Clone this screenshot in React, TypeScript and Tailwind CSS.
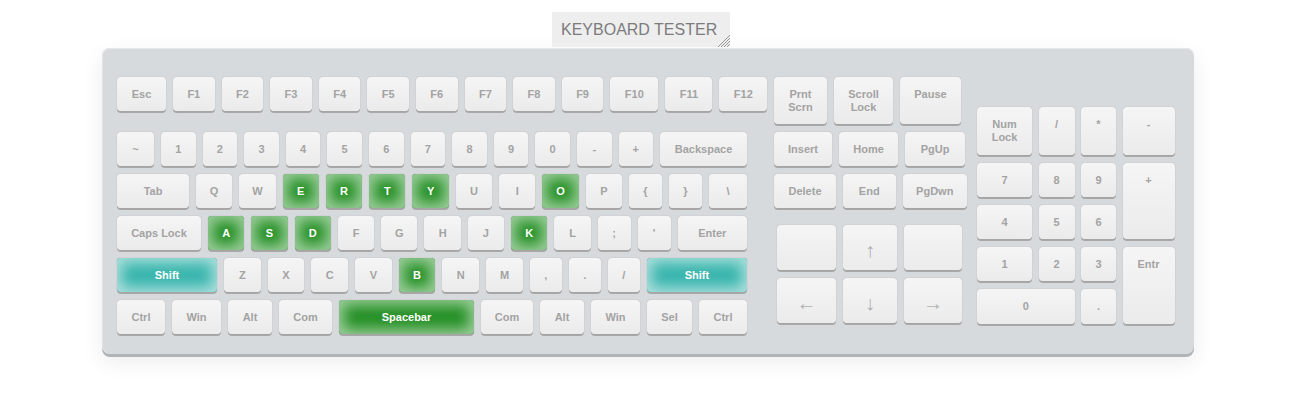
import React from "react";

type V = "n" | "g" | "s";

const styles: Record<V, string> = {
  n: "bg-linear-to-b from-[#f5f5f5] to-[#ebebeb] shadow-[0_0_1px_#8c8c8c,0_2px_0_#a8a8a8] text-[#a3a3a3]",
  g: "bg-[#238f23] shadow-[inset_0_0_14px_5px_#9dce9d,0_0_1px_#8c8c8c,0_2px_0_#a8a8a8] text-white",
  s: "bg-[#36b4ac] shadow-[inset_0_0_14px_5px_#abdfdc,0_0_1px_#8c8c8c,0_2px_0_#a8a8a8] text-white",
};

function Key({
  l,
  c = "",
  v = "n",
}: {
  l: string;
  c?: string;
  v?: V;
}) {
  return (
    <div
      className={`${c} ${styles[v]} rounded-[4px] flex justify-center items-start pt-[11px] text-[11px] leading-[12.5px] font-bold text-center whitespace-pre-line`}
    >
      {l}
    </div>
  );
}

function Arrow({ l, c }: { l: string; c: string }) {
  return (
    <div
      className={`${c} ${styles.n} rounded-[4px] flex justify-center items-center pt-[5px] text-[20px] leading-none font-normal text-[#b0b0b0]`}
    >
      {l}
    </div>
  );
}

export default function App() {
  return (
    <div className="w-[1295px] h-[400px] bg-white font-['Liberation_Sans',Arial,sans-serif]">
      <div className="flex justify-center pt-[12px] pr-[13px]">
        <div className="relative w-[178px] h-[35px] bg-[#eeeeee] flex items-center pl-[9px] text-[16px] text-[#7c7c7c]">
          KEYBOARD TESTER
          <svg
            className="absolute right-0 bottom-0"
            width="14"
            height="14"
            viewBox="0 0 14 14"
          >
            <g stroke="#808080" strokeWidth="0.8">
              <line x1="2" y1="14" x2="14" y2="2" />
              <line x1="5" y1="14" x2="14" y2="5" />
              <line x1="8" y1="14" x2="14" y2="8" />
              <line x1="11" y1="14" x2="14" y2="11" />
            </g>
          </svg>
        </div>
      </div>

      <div className="mt-[1px] mx-auto w-[1092px] h-[306px] rounded-[8px] bg-[#d7dadd] shadow-[inset_0_1px_0_#e6e8ea,inset_1px_0_0_#e2e4e6,0_3px_0_#b1b4b7,0_8px_22px_rgba(0,0,0,0.08)] flex pt-[29px] pl-[15.5px]">
        {/* main block */}
        <div className="w-[630px] shrink-0 flex flex-col">
          <div className="w-[651px] flex gap-[7px] h-[34px] mb-[21px]">
            <Key l="Esc" c="w-[49px]" />
            <Key l="F1" c="w-[41.6px]" />
            <Key l="F2" c="w-[41.6px]" />
            <Key l="F3" c="w-[41.6px]" />
            <Key l="F4" c="w-[41.6px]" />
            <Key l="F5" c="w-[41.6px]" />
            <Key l="F6" c="w-[41.6px]" />
            <Key l="F7" c="w-[41.6px]" />
            <Key l="F8" c="w-[41.6px]" />
            <Key l="F9" c="w-[41.6px]" />
            <Key l="F10" c="w-[48px]" />
            <Key l="F11" c="w-[47px]" />
            <Key l="F12" c="w-[48px]" />
          </div>
          <div className="flex gap-[7px] h-[34px] mb-[8px]">
            <Key l="~" c="w-[37px]" />
            <Key l="1" c="w-[34.6px]" />
            <Key l="2" c="w-[34.6px]" />
            <Key l="3" c="w-[34.6px]" />
            <Key l="4" c="w-[34.6px]" />
            <Key l="5" c="w-[34.6px]" />
            <Key l="6" c="w-[34.6px]" />
            <Key l="7" c="w-[34.6px]" />
            <Key l="8" c="w-[34.6px]" />
            <Key l="9" c="w-[34.6px]" />
            <Key l="0" c="w-[34.6px]" />
            <Key l="-" c="w-[34.6px]" />
            <Key l="+" c="w-[34.6px]" />
            <Key l="Backspace" c="flex-1" />
          </div>
          <div className="flex gap-[7px] h-[34px] mb-[8px]">
            <Key l="Tab" c="w-[72px]" />
            <Key l="Q" c="w-[36.3px]" />
            <Key l="W" c="w-[36.3px]" />
            <Key l="E" c="w-[36.3px]" v="g" />
            <Key l="R" c="w-[36.3px]" v="g" />
            <Key l="T" c="w-[36.3px]" v="g" />
            <Key l="Y" c="w-[36.3px]" v="g" />
            <Key l="U" c="w-[36.3px]" />
            <Key l="I" c="w-[36.3px]" />
            <Key l="O" c="w-[36.3px]" v="g" />
            <Key l="P" c="w-[36.3px]" />
            <Key l="{" c="w-[33px]" />
            <Key l="}" c="w-[33px]" />
            <Key l="\" c="flex-1" />
          </div>
          <div className="flex gap-[7px] h-[34px] mb-[8px]">
            <Key l="Caps Lock" c="w-[84px]" />
            <Key l="A" c="w-[36.3px]" v="g" />
            <Key l="S" c="w-[36.3px]" v="g" />
            <Key l="D" c="w-[36.3px]" v="g" />
            <Key l="F" c="w-[36.3px]" />
            <Key l="G" c="w-[36.3px]" />
            <Key l="H" c="w-[36.3px]" />
            <Key l="J" c="w-[36.3px]" />
            <Key l="K" c="w-[36.3px]" v="g" />
            <Key l="L" c="w-[36.3px]" />
            <Key l=";" c="w-[33px]" />
            <Key l="'" c="w-[33px]" />
            <Key l="Enter" c="flex-1" />
          </div>
          <div className="flex gap-[7px] h-[34px] mb-[8px]">
            <Key l="Shift" c="w-[100px]" v="s" />
            <Key l="Z" c="w-[36.7px]" />
            <Key l="X" c="w-[36.7px]" />
            <Key l="C" c="w-[36.7px]" />
            <Key l="V" c="w-[36.7px]" />
            <Key l="B" c="w-[36.7px]" v="g" />
            <Key l="N" c="w-[36.7px]" />
            <Key l="M" c="w-[36.7px]" />
            <Key l="," c="w-[32px]" />
            <Key l="." c="w-[32px]" />
            <Key l="/" c="w-[32px]" />
            <Key l="Shift" c="flex-1" v="s" />
          </div>
          <div className="flex gap-[7px] h-[34px]">
            <Key l="Ctrl" c="w-[48px]" />
            <Key l="Win" c="w-[49px]" />
            <Key l="Alt" c="w-[44px]" />
            <Key l="Com" c="w-[53px]" />
            <Key l="Spacebar" c="w-[135px]" v="g" />
            <Key l="Com" c="w-[52px]" />
            <Key l="Alt" c="w-[44px]" />
            <Key l="Win" c="w-[49px]" />
            <Key l="Sel" c="w-[45px]" />
            <Key l="Ctrl" c="flex-1" />
          </div>
        </div>

        {/* nav block */}
        <div className="ml-[27px] w-[193px] shrink-0 flex flex-col">
          <div className="flex gap-[7px] h-[47px] mb-[8px]">
            <Key l={"Prnt\nScrn"} c="w-[53px]" />
            <Key l={"Scroll\nLock"} c="w-[59px]" />
            <Key l="Pause" c="w-[61px]" />
          </div>
          <div className="flex gap-[7px] h-[34px] mb-[8px]">
            <Key l="Insert" c="w-[58px]" />
            <Key l="Home" c="w-[59px]" />
            <Key l="PgUp" c="w-[60px]" />
          </div>
          <div className="flex gap-[6.5px] h-[34px]">
            <Key l="Delete" c="w-[62px]" />
            <Key l="End" c="w-[53.5px]" />
            <Key l="PgDwn" c="w-[64.5px]" />
          </div>
          <div className="flex gap-[7px] h-[45px] mt-[17px] pl-[3px]">
            <Arrow l="" c="w-[59px]" />
            <Arrow l="↑" c="w-[54px]" />
            <Arrow l="" c="w-[58px]" />
          </div>
          <div className="flex gap-[7px] h-[45px] mt-[8px] pl-[3px]">
            <Arrow l="←" c="w-[59px]" />
            <Arrow l="↓" c="w-[54px]" />
            <Arrow l="→" c="w-[58px]" />
          </div>
        </div>

        {/* numpad */}
        <div className="ml-[10px] pt-[30px]">
          <div className="grid grid-cols-[55px_36px_35px_52px] grid-rows-[48px_34px_34px_34px_35px] gap-x-[6.5px] gap-y-[8px]">
            <Key l={"Num\nLock"} />
            <Key l="/" />
            <Key l="*" />
            <Key l="-" />
            <Key l="7" />
            <Key l="8" />
            <Key l="9" />
            <Key l="+" c="row-span-2" />
            <Key l="4" />
            <Key l="5" />
            <Key l="6" />
            <Key l="1" />
            <Key l="2" />
            <Key l="3" />
            <Key l="Entr" c="row-span-2" />
            <Key l="0" c="col-span-2" />
            <Key l="." />
          </div>
        </div>
      </div>
    </div>
  );
}
